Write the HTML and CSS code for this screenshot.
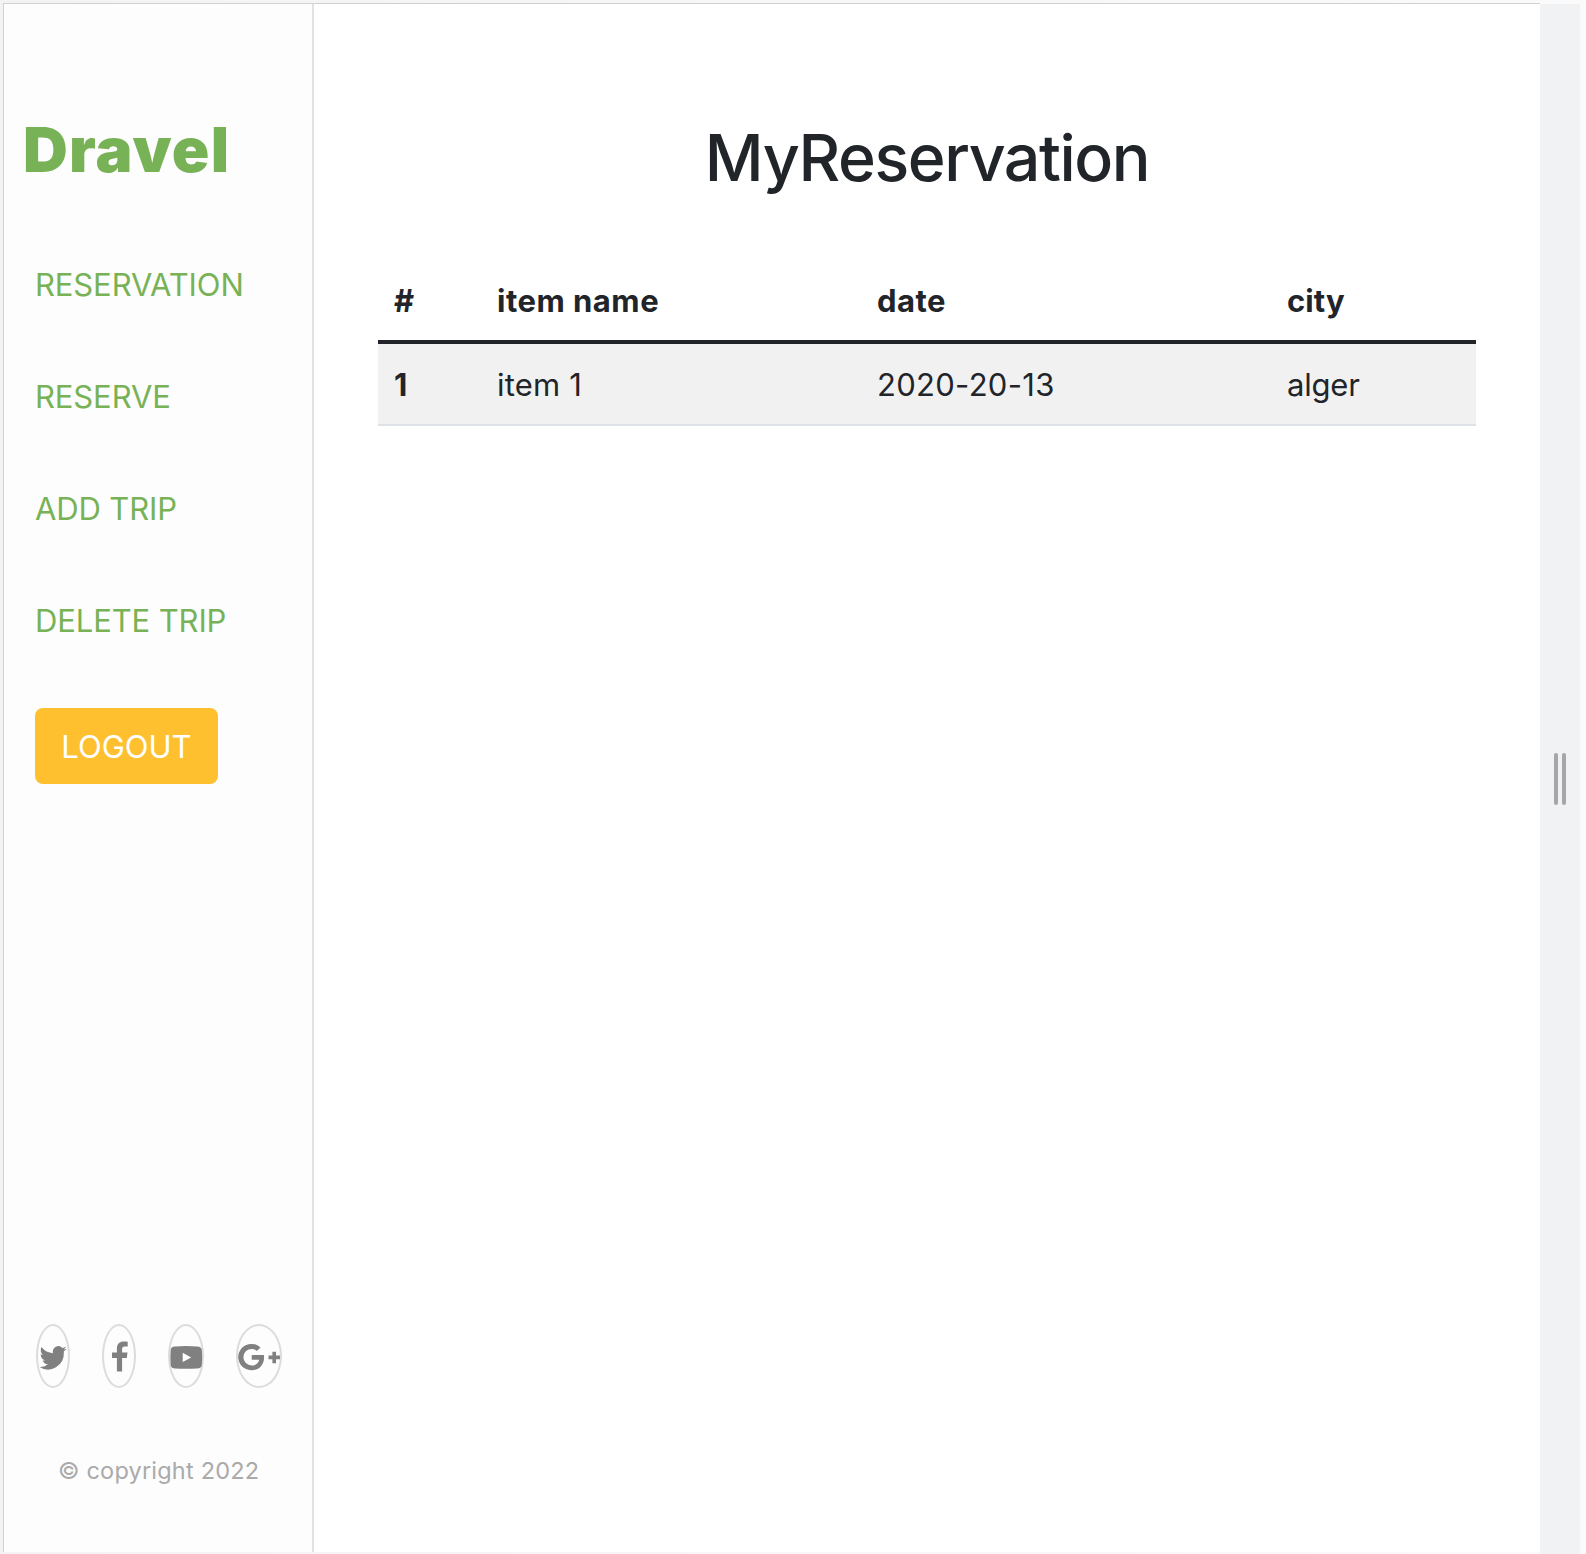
FILE: index.html
```html
<!DOCTYPE html>
<html lang="en">
<head>
<meta charset="utf-8">
<title>Dravel</title>
<link rel="stylesheet" href="styles.css">
</head>
<body>
<div class="viewport">
  <div class="page">
    <aside class="sidebar">
      <h1 class="logo">Dravel</h1>
      <nav class="menu">
        <a class="link">RESERVATION</a>
        <a class="link">RESERVE</a>
        <a class="link">ADD TRIP</a>
        <a class="link">DELETE TRIP</a>
      </nav>
      <button class="logout">LOGOUT</button>
      <div class="social">
        <a class="round"><svg width="30" height="60" viewBox="0 0 30 60"><path transform="translate(1.6 20) scale(1.13 1.2)" fill="#808080" d="M23.95 2.3a10 10 0 0 1-2.8.8 4.9 4.9 0 0 0 2.1-2.7 9.7 9.7 0 0 1-3.1 1.2A4.9 4.9 0 0 0 11.8 6 13.9 13.9 0 0 1 1.7.9a4.9 4.9 0 0 0 1.5 6.6A4.9 4.9 0 0 1 1 6.9a4.9 4.9 0 0 0 3.9 4.9 5 5 0 0 1-2.2.1 4.9 4.9 0 0 0 4.6 3.4A9.9 9.9 0 0 1 0 17.4a14 14 0 0 0 21.5-12.4v-.6a9.9 9.9 0 0 0 2.45-2.1z"/></svg></a>
        <a class="round"><svg width="30" height="60" viewBox="0 0 30 60"><path fill="#808080" d="M23.7 15.7v4.8h-2.9c-2.2 0-2.7 1.1-2.7 2.7v3.4h5.4l-.7 5.4h-4.7v13.4h-5.2V32H8v-5.4h4.9v-4c0-4.5 2.8-7.1 6.9-7.1 2 0 3.4.1 3.9.2z"/></svg></a>
        <a class="round"><svg width="32" height="60" viewBox="0 0 32 60"><path transform="translate(0 .4)" fill="#808080" fill-rule="evenodd" d="M5 20Q16 19.4 27 20Q31.7 20 31.9 24Q32.4 31 31.9 38Q31.7 42 27 42Q16 42.7 5 42Q.8 42 .6 38Q.1 31 .6 24Q.8 20 5 20zM12.7 26.3v9.4l8.5-4.7z"/></svg></a>
        <a class="round"><svg width="42" height="60" viewBox="0 0 42 60"><path fill="#808080" d="M13.7 29.1h12.2c.1.7.2 1.3.2 2.1 0 7.6-5 13.1-12.4 13.1A13.2 13.2 0 1 1 22.5 21.5l-3.6 3.5a7.3 7.3 0 0 0-5.2-2.1 8.3 8.3 0 0 0 0 16.6c5.2 0 7.1-3.7 7.4-5.8h-7.4zM34.4 25.7H38v3.9h4v3.7h-4v3.9h-3.6v-3.9h-3.9v-3.7h3.9z"/></svg></a>
      </div>
      <p class="copyright">© copyright 2022</p>
    </aside>
    <main class="content">
      <h2 class="title">MyReservation</h2>
      <table class="table">
        <colgroup><col class="c1"><col class="c2"><col class="c3"><col class="c4"></colgroup>
        <thead><tr><th>#</th><th>item name</th><th>date</th><th class="city">city</th></tr></thead>
        <tbody><tr><th>1</th><td class="item">item 1</td><td class="date">2020-20-13</td><td class="place">alger</td></tr></tbody>
      </table>
    </main>
  </div>
  <div class="handle"><i></i><i></i></div>
</div>
</body>
</html>
```
FILE: styles.css
```css
* { box-sizing: border-box; }
body {
  margin: 0;
  height: 1554px;
  padding: 3px 6px 0 3px;
  overflow: hidden;
  background: linear-gradient(90deg, #f3f3f3, #f9faf9);
  font-family: Inter, "Liberation Sans", sans-serif;
  font-size: 31px;
  color: #212529;
}
.viewport { display: flex; height: 1551px; }
.page {
  display: flex;
  width: 1537px;
  height: 1549px;
  border-top: 1px solid #d0d2d2;
  border-left: 1px solid #d0d2d2;
  background: #fff;
}
.sidebar {
  display: flex;
  flex-direction: column;
  align-items: flex-start;
  width: 310px;
  border-right: 2px solid #e2e2e2;
  background: #fdfdfd;
}
.logo {
  margin: 106px 0 0 19px;
  font-size: 62px;
  line-height: 80px;
  font-weight: 900;
  letter-spacing: 1.2px;
  color: #78b256;
}
.menu { display: flex; flex-direction: column; margin: 39px 0 0 31px; }
.link { height: 112px; line-height: 112px; letter-spacing: -0.12px; color: #78b256; white-space: nowrap; }
.logout {
  width: 183px;
  height: 76px;
  margin: 31px 0 0 31px;
  padding: 1px 0 0;
  border: 0;
  border-radius: 8px;
  background: #ffc02f;
  color: #fff;
  font: 31px/75px Inter, sans-serif;
}
.social { display: flex; gap: 32px; margin: 540px 0 0 32px; }
.round { display: flex; height: 64px; border: 2px solid #dcdcdc; border-radius: 50%; }
.round svg { display: block; overflow: visible; }
.copyright {
  margin: 67px 0 0 54px;
  font-size: 23.5px;
  line-height: 32px;
  letter-spacing: 0.2px;
  color: #aaa;
  white-space: nowrap;
}
.content { flex: 1; padding: 0 64px; }
.title {
  margin: 115px 0 0;
  font-size: 64.5px;
  line-height: 78px;
  font-weight: 500;
  letter-spacing: -1.45px;
  text-align: center;
}
.table { width: 1098px; margin-top: 63px; table-layout: fixed; border-collapse: separate; border-spacing: 0; }
.c1 { width: 103px; }
.c2 { width: 380px; }
.c3 { width: 410px; }
.c4 { width: 205px; }
.table th, .table td { padding: 2px 16px 0; line-height: 48px; text-align: left; white-space: nowrap; }
.table th { font-weight: 700; letter-spacing: 0.5px; }
.table .city { letter-spacing: 0.1px; }
.table .item { letter-spacing: 0.2px; }
.table .date { letter-spacing: 0.3px; }
.table .place { letter-spacing: -0.2px; }
.table thead th { height: 84px; border-bottom: 4px solid #212529; }
.table tbody th, .table tbody td { height: 82px; border-bottom: 2px solid #dee2e6; background: #f1f1f1; }
.handle {
  display: flex;
  justify-content: center;
  align-items: center;
  gap: 4px;
  width: 40px;
  margin-top: 1px;
  background: #f1f2f4;
}
.handle i { width: 4px; height: 52px; border-radius: 2px; background: #a6a6a6; }
```
